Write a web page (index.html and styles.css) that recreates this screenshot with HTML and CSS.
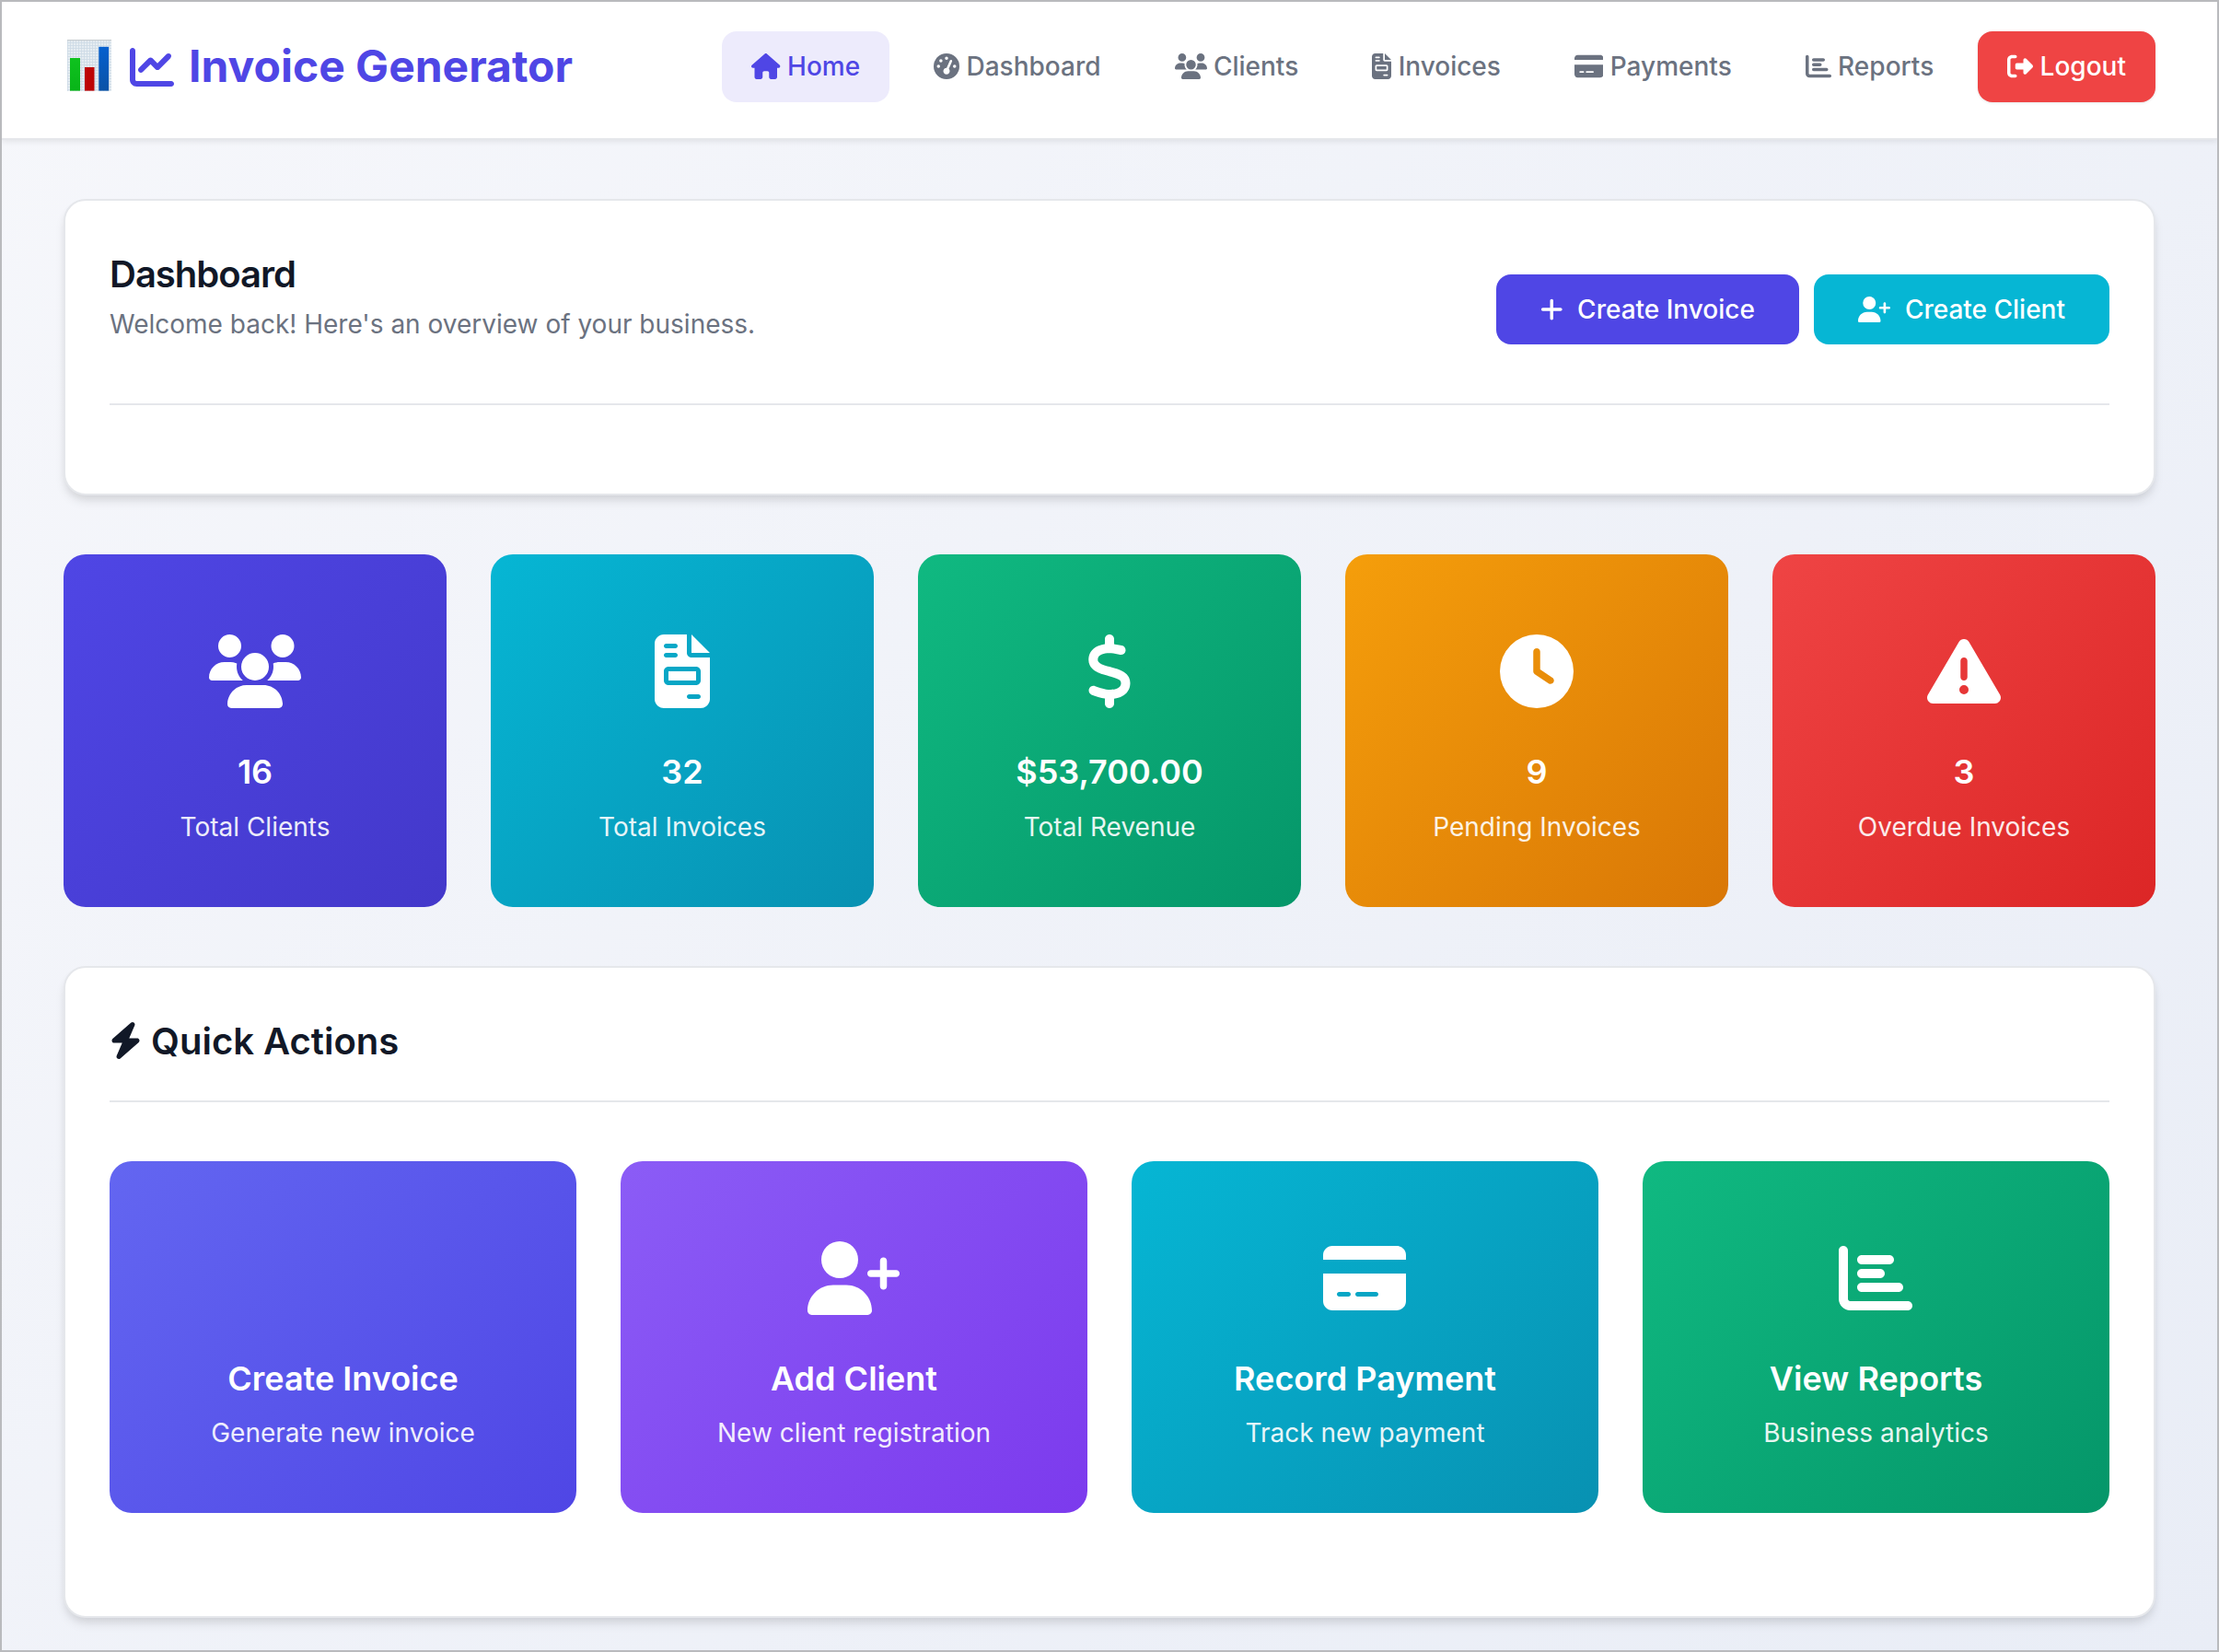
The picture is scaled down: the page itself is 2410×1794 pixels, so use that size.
FILE: index.html
```html
<!DOCTYPE html>
<html lang="en">
<head>
<meta charset="utf-8">
<title>Invoice Generator</title>
<link rel="stylesheet" href="styles.css">
</head>
<body>
<svg class="sprite" aria-hidden="true">
  <symbol id="house" viewBox="0 0 576 512"><path d="M575.8 255.5c0 18-15 32.1-32 32.1h-32l.7 160.2c0 2.7-.2 5.4-.5 8.1V472c0 22.1-17.9 40-40 40H456c-1.1 0-2.2 0-3.3-.1c-1.4 .1-2.8 .1-4.2 .1H416 392c-22.1 0-40-17.9-40-40V448 384c0-17.7-14.3-32-32-32H256c-17.7 0-32 14.3-32 32v64 24c0 22.1-17.9 40-40 40H160 128.1c-1.5 0-3-.1-4.5-.2c-1.2 .1-2.4 .2-3.6 .2H104c-22.1 0-40-17.9-40-40V360c0-.9 0-1.9 .1-2.8V287.6H32c-18 0-32-14-32-32.1c0-9 3-17 10-24L266.4 8c7-7 15-8 22-8s15 2 21 7L564.8 231.5c8 7 12 15 11 24z"/></symbol>
  <symbol id="gauge" viewBox="0 0 512 512"><path fill-rule="evenodd" d="M0 256a256 256 0 1 1 512 0A256 256 0 1 1 0 256zM288 96a32 32 0 1 0 -64 0 32 32 0 1 0 64 0zM256 416c35.3 0 64-28.7 64-64c0-17.4-6.9-33.1-18.1-44.6L366 161.7c5.3-12.1-.2-26.3-12.3-31.6s-26.3 .2-31.6 12.3L257.9 288c-.6 0-1.3 0-1.9 0c-35.3 0-64 28.7-64 64s28.7 64 64 64zM176 144a32 32 0 1 0 -64 0 32 32 0 1 0 64 0zM96 288a32 32 0 1 0 0-64 32 32 0 1 0 0 64zm352-32a32 32 0 1 0 -64 0 32 32 0 1 0 64 0z"/></symbol>
  <symbol id="users" viewBox="0 0 640 512"><path d="M144 0a80 80 0 1 1 0 160A80 80 0 1 1 144 0zM512 0a80 80 0 1 1 0 160A80 80 0 1 1 512 0zM0 298.7C0 239.8 47.8 192 106.7 192h42.7c15.9 0 31 3.5 44.6 9.7c-1.3 7.2-1.9 14.7-1.9 22.3c0 38.2 16.8 72.5 43.3 96c-.2 0-.4 0-.7 0H21.3C9.6 320 0 310.4 0 298.7zM405.3 320c-.2 0-.4 0-.7 0c26.6-23.5 43.3-57.8 43.3-96c0-7.6-.7-15-1.9-22.3c13.6-6.3 28.7-9.7 44.6-9.7h42.7C592.2 192 640 239.8 640 298.7c0 11.8-9.6 21.3-21.3 21.3H405.3zM224 224a96 96 0 1 1 192 0 96 96 0 1 1 -192 0zM128 485.3C128 411.7 187.7 352 261.3 352H378.7C452.3 352 512 411.7 512 485.3c0 14.7-11.9 26.7-26.7 26.7H154.7c-14.7 0-26.7-11.9-26.7-26.7z"/></symbol>
  <symbol id="invoice" viewBox="0 0 384 512"><path fill-rule="evenodd" d="M64 0C28.7 0 0 28.7 0 64V448c0 35.3 28.7 64 64 64H320c35.3 0 64-28.7 64-64V160H256c-17.7 0-32-14.3-32-32V0H64zM256 0V128H384L256 0zM80 64h64c8.8 0 16 7.2 16 16s-7.2 16-16 16H80c-8.8 0-16-7.2-16-16s7.2-16 16-16zm0 64h64c8.8 0 16 7.2 16 16s-7.2 16-16 16H80c-8.8 0-16-7.2-16-16s7.2-16 16-16zm16 96H288c17.7 0 32 14.3 32 32v64c0 17.7-14.3 32-32 32H96c-17.7 0-32-14.3-32-32V256c0-17.7 14.3-32 32-32zm0 32v64H288V256H96zM240 416h64c8.8 0 16 7.2 16 16s-7.2 16-16 16H240c-8.8 0-16-7.2-16-16s7.2-16 16-16z"/></symbol>
  <symbol id="card" viewBox="0 0 576 512"><path fill-rule="evenodd" d="M64 32C28.7 32 0 60.7 0 96v32H576V96c0-35.3-28.7-64-64-64H64zM576 224H0V416c0 35.3 28.7 64 64 64H512c35.3 0 64-28.7 64-64V224zM112 352h64c8.8 0 16 7.2 16 16s-7.2 16-16 16H112c-8.8 0-16-7.2-16-16s7.2-16 16-16zm112 16c0-8.8 7.2-16 16-16H368c8.8 0 16 7.2 16 16s-7.2 16-16 16H240c-8.8 0-16-7.2-16-16z"/></symbol>
  <symbol id="chart-bar" viewBox="0 0 512 512"><path d="M32 32c17.7 0 32 14.3 32 32V400c0 8.8 7.2 16 16 16H480c17.7 0 32 14.3 32 32s-14.3 32-32 32H80c-44.2 0-80-35.8-80-80V64C0 46.3 14.3 32 32 32zm96 96c0-17.7 14.3-32 32-32l192 0c17.7 0 32 14.3 32 32s-14.3 32-32 32l-192 0c-17.7 0-32-14.3-32-32zm32 64H288c17.7 0 32 14.3 32 32s-14.3 32-32 32H160c-17.7 0-32-14.3-32-32s14.3-32 32-32zm0 96H416c17.7 0 32 14.3 32 32s-14.3 32-32 32H160c-17.7 0-32-14.3-32-32s14.3-32 32-32z"/></symbol>
  <symbol id="logout" viewBox="0 0 512 512"><path d="M377.9 105.9L500.7 228.7c7.2 7.2 11.3 17.1 11.3 27.3s-4.1 20.1-11.3 27.3L377.9 406.1c-6.4 6.4-15 9.9-24 9.9c-18.7 0-33.9-15.2-33.9-33.9l0-62.1-128 0c-17.7 0-32-14.3-32-32l0-64c0-17.7 14.3-32 32-32l128 0 0-62.1c0-18.7 15.2-33.9 33.9-33.9c9 0 17.6 3.6 24 9.9zM160 96L96 96c-17.7 0-32 14.3-32 32l0 256c0 17.7 14.3 32 32 32l64 0c17.7 0 32 14.3 32 32s-14.3 32-32 32l-64 0c-53 0-96-43-96-96L0 128C0 75 43 32 96 32l64 0c17.7 0 32 14.3 32 32s-14.3 32-32 32z"/></symbol>
  <symbol id="chart-line" viewBox="0 0 512 512"><path d="M64 64c0-17.7-14.3-32-32-32S0 46.3 0 64V400c0 44.2 35.8 80 80 80H480c17.7 0 32-14.3 32-32s-14.3-32-32-32H80c-8.8 0-16-7.2-16-16V64zm406.6 86.6c12.5-12.5 12.5-32.8 0-45.3s-32.8-12.5-45.3 0L320 210.7l-57.4-57.4c-12.5-12.5-32.8-12.5-45.3 0l-112 112c-12.5 12.5-12.5 32.8 0 45.3s32.8 12.5 45.3 0L240 221.3l57.4 57.4c12.5 12.5 32.8 12.5 45.3 0l128-128z"/></symbol>
  <symbol id="plus" viewBox="0 0 448 512"><path d="M256 80c0-17.7-14.3-32-32-32s-32 14.3-32 32V224H48c-17.7 0-32 14.3-32 32s14.3 32 32 32H192V432c0 17.7 14.3 32 32 32s32-14.3 32-32V288H400c17.7 0 32-14.3 32-32s-14.3-32-32-32H256V80z"/></symbol>
  <symbol id="user-plus" viewBox="0 0 640 512"><path d="M96 128a128 128 0 1 1 256 0A128 128 0 1 1 96 128zM0 482.3C0 383.8 79.8 304 178.3 304h91.4C368.2 304 448 383.8 448 482.3c0 16.4-13.3 29.7-29.7 29.7H29.7C13.3 512 0 498.7 0 482.3zM504 312V248H440c-13.3 0-24-10.7-24-24s10.7-24 24-24h64V136c0-13.3 10.7-24 24-24s24 10.7 24 24v64h64c13.3 0 24 10.7 24 24s-10.7 24-24 24H552v64c0 13.3-10.7 24-24 24s-24-10.7-24-24z"/></symbol>
  <symbol id="dollar" viewBox="0 0 320 512"><path d="M160 0c17.7 0 32 14.3 32 32V67.7c1.6 .2 3.1 .4 4.7 .7c.4 .1 .7 .1 1.1 .2l48 8.8c17.4 3.2 28.9 19.9 25.7 37.2s-19.9 28.9-37.2 25.7l-47.5-8.7c-31.3-4.6-58.9-1.5-78.3 6.2s-27.2 18.3-29 28.1c-2 10.7-.5 16.7 1.2 20.4c1.8 3.9 5.5 8.3 12.8 13.2c16.3 10.7 41.3 17.7 73.7 26.3l2.9 .8c28.6 7.6 63.6 16.8 89.6 33.8c14.2 9.3 27.6 21.9 35.9 39.5c8.5 17.9 10.3 37.9 6.4 59.2c-6.9 38-33.1 63.4-65.6 76.7c-13.7 5.6-28.6 9.2-44.4 11V480c0 17.7-14.3 32-32 32s-32-14.3-32-32V445.1c-.4-.1-.9-.1-1.3-.2l-.2 0 0 0c-24.4-3.8-64.5-14.3-91.5-26.3c-16.1-7.2-23.4-26.1-16.2-42.2s26.1-23.4 42.2-16.2c20.9 9.3 55.3 18.5 75.2 21.6c31.9 4.7 58.2 2 76-5.3c16.9-6.9 24.6-16.9 26.8-28.9c1.9-10.6 .4-16.7-1.3-20.4c-1.9-4-5.6-8.4-13-13.3c-16.4-10.7-41.5-17.7-74-26.3l-2.8-.7 0 0C119.4 279.3 84.4 270 58.4 253c-14.2-9.3-27.5-22-35.8-39.6c-8.4-17.9-10.1-37.9-6.1-59.2C23.7 116 52.3 91.2 84.8 78.3c13.3-5.3 27.9-8.9 43.2-11V32c0-17.7 14.3-32 32-32z"/></symbol>
  <symbol id="clock" viewBox="0 0 512 512"><path fill-rule="evenodd" d="M256 0a256 256 0 1 1 0 512A256 256 0 1 1 256 0zM232 120V256c0 8 4 15.5 10.7 20l96 64c11 7.4 25.9 4.4 33.3-6.7s4.4-25.9-6.7-33.3L280 243.2V120c0-13.3-10.7-24-24-24s-24 10.7-24 24z"/></symbol>
  <symbol id="warning" viewBox="0 0 512 512"><path fill-rule="evenodd" d="M256 32c14.2 0 27.3 7.5 34.5 19.8l216 368c7.3 12.4 7.3 27.7 .2 40.1S486.3 480 472 480H40c-14.3 0-27.6-7.7-34.7-20.1s-7-27.8 .2-40.1l216-368C228.7 39.5 241.8 32 256 32zm0 128c-13.3 0-24 10.7-24 24V296c0 13.3 10.7 24 24 24s24-10.7 24-24V184c0-13.3-10.7-24-24-24zm32 224a32 32 0 1 0 -64 0 32 32 0 1 0 64 0z"/></symbol>
  <symbol id="bolt" viewBox="0 0 448 512"><path d="M349.4 44.6c5.9-13.7 1.5-29.7-10.6-38.5s-28.6-8-39.9 1.8l-256 224c-10 8.8-13.6 22.9-8.9 35.3S50.7 288 64 288H175.5L98.6 467.4c-5.9 13.7-1.5 29.7 10.6 38.5s28.6 8 39.9-1.8l256-224c10-8.8 13.6-22.9 8.9-35.3s-16.6-20.7-30-20.7H272.5L349.4 44.6z"/></symbol>
</svg>

<header class="header">
  <div class="brand">
    <svg class="brand-chart" viewBox="0 0 48 56">
      <defs>
        <pattern id="grid" width="3" height="3" patternUnits="userSpaceOnUse">
          <rect width="3" height="3" fill="#e6edf2"/>
          <path d="M0 .5H3M.5 0V3" stroke="#cddbe6" stroke-width=".8"/>
        </pattern>
        <linearGradient id="green" x2="0" y2="1"><stop stop-color="#0fc21f"/><stop offset="1" stop-color="#08b418"/></linearGradient>
        <linearGradient id="blue" x2="0" y2="1"><stop stop-color="#0560cf"/><stop offset="1" stop-color="#0a52a6"/></linearGradient>
      </defs>
      <rect width="48" height="56" fill="url(#grid)"/>
      <path d="M0 .6H48" stroke="#c9ced2" stroke-width="1.2"/>
      <rect x="3" y="20" width="11" height="35.6" fill="url(#green)"/>
      <rect x="19" y="30" width="10.5" height="25.6" fill="#bd0505"/>
      <rect x="34.3" y="7.8" width="10.8" height="47.8" fill="url(#blue)"/>
    </svg>
    <svg class="icon"><use href="#chart-line"/></svg>
    <span>Invoice Generator</span>
  </div>
  <nav class="nav">
    <a class="nav-link active"><svg class="icon w576"><use href="#house"/></svg><span>Home</span></a>
    <a class="nav-link"><svg class="icon"><use href="#gauge"/></svg><span>Dashboard</span></a>
    <a class="nav-link"><svg class="icon w640"><use href="#users"/></svg><span>Clients</span></a>
    <a class="nav-link"><svg class="icon w384"><use href="#invoice"/></svg><span>Invoices</span></a>
    <a class="nav-link"><svg class="icon w576"><use href="#card"/></svg><span>Payments</span></a>
    <a class="nav-link"><svg class="icon"><use href="#chart-bar"/></svg><span>Reports</span></a>
    <a class="nav-link logout"><svg class="icon"><use href="#logout"/></svg><span>Logout</span></a>
  </nav>
</header>

<main class="main">
  <section class="panel overview">
    <div class="overview-head">
      <div class="intro">
        <h1 class="title tight">Dashboard</h1>
        <p class="subtitle">Welcome back! Here's an overview of your business.</p>
      </div>
      <div class="buttons">
        <a class="btn primary"><svg class="icon w448"><use href="#plus"/></svg><span>Create Invoice</span></a>
        <a class="btn info"><svg class="icon w640"><use href="#user-plus"/></svg><span>Create Client</span></a>
      </div>
    </div>
  </section>

  <section class="stats">
    <div class="tile indigo-dark"><svg class="icon w640"><use href="#users"/></svg><h3>16</h3><p>Total Clients</p></div>
    <div class="tile cyan"><svg class="icon w384"><use href="#invoice"/></svg><h3>32</h3><p>Total Invoices</p></div>
    <div class="tile green"><svg class="icon w320"><use href="#dollar"/></svg><h3>$53,700.00</h3><p>Total Revenue</p></div>
    <div class="tile amber"><svg class="icon"><use href="#clock"/></svg><h3>9</h3><p>Pending Invoices</p></div>
    <div class="tile red"><svg class="icon"><use href="#warning"/></svg><h3>3</h3><p>Overdue Invoices</p></div>
  </section>

  <section class="panel quick">
    <h2 class="title quick-head"><svg class="icon w448"><use href="#bolt"/></svg><span>Quick Actions</span></h2>
    <div class="actions">
      <a class="tile indigo"><span class="icon"></span><h3>Create Invoice</h3><p>Generate new invoice</p></a>
      <a class="tile violet"><svg class="icon w640"><use href="#user-plus"/></svg><h3>Add Client</h3><p>New client registration</p></a>
      <a class="tile cyan"><svg class="icon w576"><use href="#card"/></svg><h3>Record Payment</h3><p>Track new payment</p></a>
      <a class="tile green"><svg class="icon"><use href="#chart-bar"/></svg><h3>View Reports</h3><p>Business analytics</p></a>
    </div>
  </section>
</main>
</body>
</html>
```
FILE: styles.css
```css
* { box-sizing: border-box; margin: 0; padding: 0; }

body {
  height: 1794px;
  overflow: hidden;
  border: 2px solid #b9babd;
  background: linear-gradient(135deg, #f6f7fb 0%, #e9edf6 100%);
  color: #111827;
  font-family: Inter, "Liberation Sans", sans-serif;
  font-size: 28px;
  line-height: 1.6;
}

.sprite { display: none; }

.icon { flex: none; width: 1em; height: 1em; fill: currentColor; }
.w640 { width: 1.25em; }
.w576 { width: 1.125em; }
.w448 { width: .875em; }
.w384 { width: .75em; }
.w320 { width: .625em; }

.header {
  display: flex;
  justify-content: space-between;
  align-items: flex-start;
  height: 150px;
  padding: 32px 67px 0;
  border-bottom: 2px solid #e5e7eb;
  background: #fff;
  box-shadow: 0 2px 6px rgba(0, 0, 0, .08);
}

.brand {
  display: flex;
  align-items: center;
  height: 76px;
  padding-left: 4px;
  color: #4f46e5;
  font-size: 48px;
  font-weight: 700;
}
.brand-chart { width: 48px; height: 56px; margin: 0 20px 2px 0; }
.brand .icon { margin: 2px 16px 0 0; }

.nav { display: flex; gap: 16px; }
.nav-link {
  display: flex;
  align-items: center;
  gap: 7.4px;
  height: 77px;
  padding: 0 32px;
  border-radius: 16px;
  color: #6b7280;
  font-weight: 500;
}
.nav-link .icon { margin-bottom: 1.5px; }
.nav-link.active { background: #edebfc; color: #4f46e5; }
.nav-link.logout { background: #ef4444; color: #fff; box-shadow: 0 1px 3px rgba(0, 0, 0, .1); }

.main { display: flex; flex-direction: column; gap: 64px; padding: 64px 67px 0; }

.panel {
  padding: 48px;
  border: 2px solid #e5e7eb;
  border-radius: 24px;
  background: #fff;
  box-shadow: 0 8px 12px -2px rgba(0, 0, 0, .1), 0 4px 8px -2px rgba(0, 0, 0, .06);
}
.overview { height: 322px; }
.overview-head {
  display: flex;
  justify-content: space-between;
  align-items: center;
  height: 174px;
  padding-bottom: 32px;
  border-bottom: 2px solid #e5e7eb;
}
.title { font-size: 40px; font-weight: 600; line-height: 64px; }
.tight { letter-spacing: -1px; }
.subtitle { margin-bottom: 32px; color: #6b7280; line-height: 44px; }

.buttons { display: flex; gap: 16px; }
.btn {
  display: flex;
  align-items: center;
  gap: 16px;
  height: 76px;
  padding: 0 48px;
  border-radius: 16px;
  color: #fff;
  font-weight: 500;
}
.btn .icon { margin-bottom: 1px; }
.primary { background: #4f46e5; }
.info { background: #06b6d4; }

.stats { display: grid; grid-template-columns: repeat(5, 1fr); gap: 48px; height: 383px; }
.actions { display: grid; grid-template-columns: repeat(4, 1fr); gap: 48px; height: 382px; }

.tile {
  display: flex;
  flex-direction: column;
  align-items: center;
  padding-top: 87px;
  border-radius: 24px;
  color: #fff;
}
.tile .icon { height: 80px; margin-bottom: 40px; font-size: 80px; }
.tile h3 { margin-bottom: 8px; font-size: 36px; font-weight: 600; line-height: 58px; }
.tile p { line-height: 44px; opacity: .9; }
.stats h3 { margin-bottom: 9px; }
.actions .icon { margin-right: 1px; }

.indigo-dark { background: linear-gradient(135deg, #4f46e5, #4338ca); }
.indigo { background: linear-gradient(135deg, #6366f1, #4f46e5); }
.violet { background: linear-gradient(135deg, #8b5cf6, #7c3aed); }
.cyan { background: linear-gradient(135deg, #06b6d4, #0891b2); }
.green { background: linear-gradient(135deg, #10b981, #059669); }
.amber { background: linear-gradient(135deg, #f59e0b, #d97706); }
.red { background: linear-gradient(135deg, #ef4444, #dc2626); }

.quick { height: 708px; }
.quick-head {
  display: flex;
  align-items: center;
  gap: 10px;
  height: 98px;
  margin-bottom: 64px;
  padding-bottom: 32px;
  border-bottom: 2px solid #e5e7eb;
}
.quick-head .icon { margin-bottom: 2px; }
```
